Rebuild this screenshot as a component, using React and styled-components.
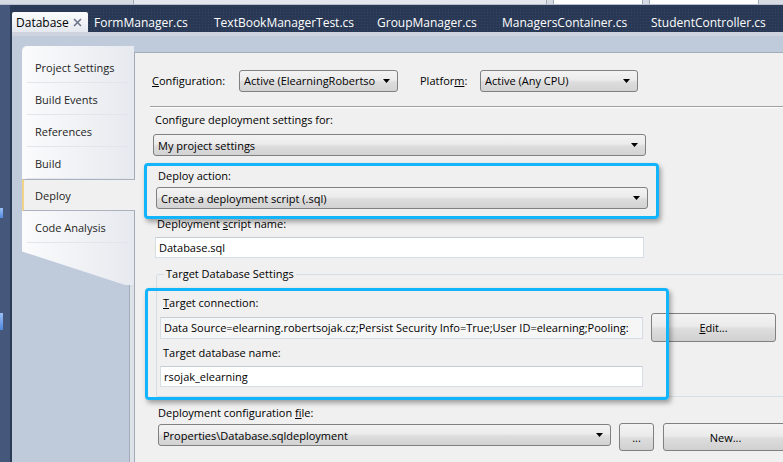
import React from 'react'
import styled, { createGlobalStyle } from 'styled-components'

const GlobalStyle = createGlobalStyle`
  html, body {
    margin: 0;
    padding: 0;
  }
  body {
    background: #bfcadb;
    font-family: "Open Sans", "Noto Sans", sans-serif;
    font-size: 11px;
    color: #000;
  }
`

const Screen = styled.div`
  width: 783px;
  height: 462px;
  overflow: hidden;
  display: flex;
  flex-direction: column;
  background: #bfcadb;
`

const TopStrip = styled.div`
  height: 5px;
  flex: none;
  display: flex;
  background: #d6dbe4;
  border-bottom: 1px solid #b8c0cd;
  box-sizing: border-box;
`

const StripCell = styled.div`
  width: ${p => p.$w}px;
  margin-left: ${p => p.$ml || 0}px;
  background: ${p => (p.$white ? '#ffffff' : '#e4e8ee')};
  border-left: 1px solid #9ea7b5;
  border-right: 1px solid #9ea7b5;
  box-sizing: border-box;
`

const Body = styled.div`
  flex: 1;
  display: flex;
  min-height: 0;
`

const LeftRail = styled.div`
  width: 10px;
  flex: none;
  background: #45587b;
  border-right: 2px solid #2b3a57;
  display: flex;
  flex-direction: column;
`

const RailMark = styled.div`
  width: 3px;
  height: ${p => p.$h}px;
  margin-top: ${p => p.$mt}px;
  background: linear-gradient(#9cc0f5, #4f86e0);
`

const Editor = styled.div`
  flex: 1;
  display: flex;
  flex-direction: column;
  min-width: 0;
`

const TabBar = styled.div`
  height: 27px;
  flex: none;
  display: flex;
  align-items: flex-end;
  background-color: #293955;
  background-image: radial-gradient(rgba(255, 255, 255, 0.06) 1px, transparent 1px);
  background-size: 3px 3px;
`

const DocTab = styled.div`
  width: ${p => p.$w}px;
  flex: none;
  height: 20px;
  box-sizing: border-box;
  padding-left: ${p => (p.$active ? 4 : 6)}px;
  display: flex;
  align-items: center;
  font-size: 12px;
  color: ${p => (p.$active ? '#000' : '#fff')};
  background: ${p => (p.$active ? 'linear-gradient(#fbfcfd, #e4e8ef)' : 'transparent')};
  border-radius: 2px 2px 0 0;
  white-space: nowrap;
`

const CloseX = styled.svg`
  width: 9px;
  height: 9px;
  margin-left: auto;
  margin-right: 6px;
`

const DocArea = styled.div`
  flex: 1;
  display: flex;
  align-items: flex-start;
  padding: 10px 0 0 10px;
  min-height: 0;
  background: #bfcadb;
  border-top: 4px solid #cdd4df;
  box-sizing: border-box;
`

const SideTabs = styled.div`
  width: 112px;
  flex: none;
  position: relative;
  z-index: 1;
  display: flex;
  flex-direction: column;
`

const tabFill = 'linear-gradient(to right, #fbfbfc, #e6e9ef)'

const TabsCap = styled.div`
  height: 5px;
  background: ${tabFill};
  border-radius: 8px 0 0 0;
`

const SideTab = styled.div`
  height: 32px;
  box-sizing: border-box;
  display: flex;
  align-items: center;
  padding-left: ${p => (p.$selected ? 11 : 13)}px;
  color: #1e1e1e;
  font-size: 11px;
  position: relative;
  ${p => p.$selected
    ? `
    background: #f0f0f0;
    width: calc(100% + 1px);
    border-left: 2px solid #f1d289;
    border-top: 1px solid #aab2be;
    border-bottom: 1px solid #aab2be;
  `
    : `
    background: ${tabFill};
    &::after {
      content: '';
      position: absolute;
      left: 5px;
      right: 6px;
      bottom: 0;
      height: 1px;
      background: #e2e5eb;
    }
  `}
`

const SideTail = styled.div`
  height: 42px;
  background: ${tabFill};
  clip-path: polygon(0 0, 100% 0, 100% 100%, 92% 100%, 0 20%);
`

const Panel = styled.div`
  flex: 1;
  align-self: stretch;
  margin-top: 6px;
  position: relative;
  overflow: hidden;
  background: #f0f0f0;
  border-left: 1px solid #a3abb8;
  border-top: 1px solid #a3abb8;
  box-shadow: -4px 0 0 #dde2e9, -5px 0 0 #a3acba;
`

const ConfigRow = styled.div`
  display: flex;
  align-items: center;
  height: 23px;
  margin: 16px 0 0 17px;
`

const InlineLabel = styled.span`
  width: ${p => p.$w}px;
  margin-left: ${p => p.$ml || 0}px;
  flex: none;
  white-space: nowrap;
`

const ComboBox = styled.div`
  width: ${p => p.$w}px;
  height: ${p => p.$h || 22}px;
  margin-left: ${p => p.$ml || 0}px;
  margin-top: ${p => p.$mt || 0}px;
  flex: none;
  box-sizing: border-box;
  display: flex;
  align-items: center;
  padding: 0 7px 0 4px;
  border: 1px solid #7f8081;
  border-radius: 3px;
  background: linear-gradient(#f3f3f3 0%, #ebebeb 45%, #dddddd 55%, #d2d2d2 100%);
  white-space: nowrap;
  overflow: hidden;
`

const ComboText = styled.span`
  flex: 1;
  overflow: hidden;
`

const Arrow = styled.svg`
  width: 7px;
  height: 4px;
  flex: none;
`

const Divider = styled.div`
  height: 1px;
  margin: 14px 0 0 15px;
  background: #a0a0a0;
  border-bottom: 1px solid #ffffff;
`

const Form = styled.div`
  display: flex;
  flex-direction: column;
  padding-left: 18px;
`

const FieldLabel = styled.div`
  line-height: 16px;
  margin-top: ${p => p.$mt || 0}px;
  padding-left: ${p => p.$indent || 0}px;
  white-space: nowrap;
`

const TextBox = styled.div`
  width: ${p => p.$w}px;
  height: ${p => p.$h || 21}px;
  margin-top: ${p => p.$mt || 0}px;
  margin-left: ${p => p.$ml || 0}px;
  flex: none;
  box-sizing: border-box;
  display: flex;
  align-items: center;
  padding-left: 3px;
  background: ${p => (p.$readonly ? '#f6f6f6' : '#ffffff')};
  border: 1px solid #d7dde5;
  border-top-color: #c6ccd5;
  white-space: nowrap;
  overflow: hidden;
`

const GroupBox = styled.fieldset`
  margin: 7px -30px 0 3px;
  padding: 0 0 9px 4px;
  border: 1px solid #d6dee5;
  border-radius: 2px;
  min-width: 0;
`

const Legend = styled.legend`
  margin-left: 3px;
  padding: 0 2px;
  line-height: 18px;
  color: #000;
`

const Row = styled.div`
  display: flex;
  align-items: ${p => p.$align || 'center'};
  margin-top: ${p => p.$mt || 0}px;
  margin-left: ${p => p.$ml || 0}px;
`

const PushButton = styled.div`
  width: ${p => p.$w}px;
  height: ${p => p.$h}px;
  margin-left: ${p => p.$ml || 0}px;
  flex: none;
  box-sizing: border-box;
  display: flex;
  align-items: center;
  justify-content: center;
  border: 1px solid #7f8081;
  border-radius: 3px;
  background: linear-gradient(#f3f3f3 0%, #ebebeb 45%, #dddddd 55%, #d0d0d0 100%);
`

const Callout = styled.div`
  position: absolute;
  left: ${p => p.$left}px;
  top: ${p => p.$top}px;
  width: ${p => p.$w}px;
  height: ${p => p.$h}px;
  box-sizing: border-box;
  border: 3px solid #12b4fb;
  border-radius: 4px;
  box-shadow: 2px 3px 5px rgba(0, 0, 0, 0.35);
  pointer-events: none;
`

const Combo = ({ w, h, ml, mt, children }) => (
  <ComboBox $w={w} $h={h} $ml={ml} $mt={mt}>
    <ComboText>{children}</ComboText>
    <Arrow viewBox="0 0 7 4">
      <path d="M0 0h7L3.5 4z" fill="#000" />
    </Arrow>
  </ComboBox>
)

const docTabs = [
  { name: 'FormManager.cs', w: 120 },
  { name: 'TextBookManagerTest.cs', w: 163 },
  { name: 'GroupManager.cs', w: 125 },
  { name: 'ManagersContainer.cs', w: 149 },
  { name: 'StudentController.cs', w: 140 },
]

const pages = ['Project Settings', 'Build Events', 'References', 'Build', 'Deploy', 'Code Analysis']

const App = () => {
  return (
    <Screen>
      <GlobalStyle />
      <TopStrip>
        <StripCell $w={414} $ml={133} />
        <StripCell $w={90} $ml={6} $white />
        <StripCell $w={110} $ml={6} $white />
      </TopStrip>
      <Body>
        <LeftRail>
          <RailMark $mt={203} $h={10} />
          <RailMark $mt={95} $h={17} />
        </LeftRail>
        <Editor>
          <TabBar>
            <DocTab $w={76} $active>
              Database
              <CloseX viewBox="0 0 9 9">
                <path d="M1 1l7 7M8 1L1 8" stroke="#6b7488" strokeWidth="1.6" />
              </CloseX>
            </DocTab>
            {docTabs.map(t => (
              <DocTab key={t.name} $w={t.w}>{t.name}</DocTab>
            ))}
          </TabBar>
          <DocArea>
            <SideTabs>
              <TabsCap />
              {pages.map(p => (
                <SideTab key={p} $selected={p === 'Deploy'}>{p}</SideTab>
              ))}
              <SideTail />
            </SideTabs>
            <Panel>
              <ConfigRow>
                <InlineLabel $w={87}><u>C</u>onfiguration:</InlineLabel>
                <Combo w={159}>Active (ElearningRobertso</Combo>
                <InlineLabel $w={60} $ml={22}>Platfor<u>m</u>:</InlineLabel>
                <Combo w={158}>Active (Any CPU)</Combo>
              </ConfigRow>
              <Divider />
              <Form>
                <FieldLabel $mt={4} $indent={2}>Configure deployment settings for:</FieldLabel>
                <Combo w={493} mt={6}>My project settings</Combo>
                <FieldLabel $mt={12} $indent={5}>Deploy action:</FieldLabel>
                <Combo w={492} mt={3} ml={3}>Create a deployment script (.sql)</Combo>
                <FieldLabel $mt={7} $indent={4}>Deployment <u>s</u>cript name:</FieldLabel>
                <TextBox $w={489} $mt={5} $ml={2}>Database.sql</TextBox>
                <GroupBox>
                  <Legend>Target Database Settings</Legend>
                  <FieldLabel $mt={12} $indent={2}><u>T</u>arget connection:</FieldLabel>
                  <Row $mt={2} $ml={-1}>
                    <TextBox $w={483} $h={22} $readonly>
                      Data Source=elearning.robertsojak.cz;Persist Security Info=True;User ID=elearning;Pooling:
                    </TextBox>
                    <PushButton $w={125} $h={29} $ml={8}><span><u>E</u>dit...</span></PushButton>
                  </Row>
                  <FieldLabel $mt={3} $indent={2}>Tar<u>g</u>et database name:</FieldLabel>
                  <TextBox $w={483} $mt={5} $ml={-1}>rsojak_elearning</TextBox>
                </GroupBox>
                <FieldLabel $mt={8} $indent={5}>Deployment configuration <u>f</u>ile:</FieldLabel>
                <Row $mt={2} $ml={5} $align="flex-start">
                  <Combo w={453} mt={1}>Properties\Database.sqldeployment</Combo>
                  <PushButton $w={35} $h={28} $ml={8}>...</PushButton>
                  <PushButton $w={125} $h={28} $ml={9}>New...</PushButton>
                </Row>
                <FieldLabel $mt={8} $indent={5}>Sql command variables file:</FieldLabel>
              </Form>
              <Callout $left={9} $top={110} $w={515} $h={56} />
              <Callout $left={10} $top={235} $w={524} $h={112} />
            </Panel>
          </DocArea>
        </Editor>
      </Body>
    </Screen>
  )
}

export default App
